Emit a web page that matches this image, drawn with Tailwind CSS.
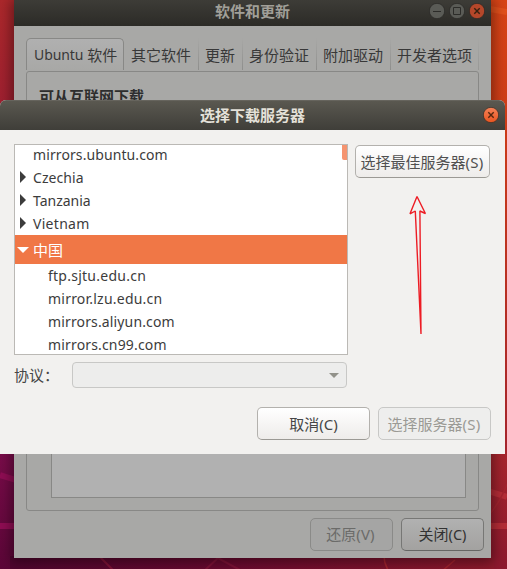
<!DOCTYPE html>
<html lang="zh-CN">
<head>
<meta charset="utf-8">
<title>软件和更新</title>
<script src="https://cdn.jsdelivr.net/npm/@tailwindcss/browser@4"></script>
</head>
<body class="overflow-hidden">
<div class="relative w-[507px] h-[569px] overflow-hidden font-['Noto_Sans','Noto_Sans_CJK_SC',sans-serif] text-[15px] leading-[22px] text-[#464646] whitespace-nowrap">
  <!-- wallpaper -->
  <svg class="absolute inset-0" width="507" height="569" viewBox="0 0 507 569">
    <defs>
      <linearGradient id="l" x1="0" y1="0" x2="0" y2="1"><stop offset="0" stop-color="#ac282b"/><stop offset=".18" stop-color="#9f2030"/><stop offset=".8" stop-color="#780c49"/><stop offset="1" stop-color="#5b0637"/></linearGradient>
      <linearGradient id="r" x1="0" y1="0" x2="0" y2="1"><stop offset="0" stop-color="#d84416"/><stop offset=".2" stop-color="#cf3d18"/><stop offset=".8" stop-color="#a6252d"/><stop offset="1" stop-color="#8d182e"/></linearGradient>
      <linearGradient id="b" x1="0" y1="0" x2="1" y2="0"><stop offset="0" stop-color="#50052f"/><stop offset=".45" stop-color="#6b0a30"/><stop offset="1" stop-color="#8f1a2c"/></linearGradient>
    </defs>
    <rect width="507" height="569" fill="url(#l)"/>
    <rect x="250" width="257" height="569" fill="url(#r)"/>
    <rect x="10" y="556" width="484" height="13" fill="url(#b)"/>
    <g fill="none">
      <path d="M0 475L16 480M0 526H16" stroke="#8f0d53" stroke-width="6"/>
      <path d="M488 491L507 497M488 526H507" stroke="#b52d37" stroke-width="6"/>
      <path d="M488 516Q500 503 507 484M455 560L441 572M384 556Q384 563 388 570" stroke="#a5242f" stroke-width="1.5"/>
      <path d="M100 557L114 571M219 557L203 572M216 557L240 570" stroke="#801338" stroke-width="2"/>
      <path d="M490 9L507 12" stroke="#e2501c" stroke-width="6"/>
    </g>
  </svg>

  <!-- main window -->
  <div class="absolute left-[14px] top-0 w-[477px] h-[558px] flex flex-col bg-[#a8a8a6] shadow-[0_2px_12px_3px_rgba(0,0,0,0.4)]">
    <div class="relative h-[26px] shrink-0 flex items-center justify-center bg-linear-to-b from-[#3d3c37] to-[#2c2b27] text-[#a09f98] font-bold">
      <span class="-translate-y-[2px]">软件和更新</span>
      <div class="absolute right-[6px] top-[3px] flex gap-[4px]">
        <svg width="16" height="16" viewBox="0 0 16 16"><circle cx="8" cy="8" r="7.7" fill="#5a5b56" stroke="#2b2a27" stroke-width=".8"/><path d="M4 8.5H12" stroke="#2c2c29"/></svg>
        <svg width="16" height="16" viewBox="0 0 16 16"><circle cx="8" cy="8" r="7.7" fill="#5a5b56" stroke="#2b2a27" stroke-width=".8"/><path d="M4.5 4.5h7v7h-7z" fill="none" stroke="#2c2c29"/></svg>
        <svg width="16" height="16" viewBox="0 0 16 16"><circle cx="8" cy="8" r="7.7" fill="#b5472a" stroke="#2b2a27" stroke-width=".8"/><path d="M5.3 5.3l5.4 5.4M10.7 5.3l-5.4 5.4" stroke="#35200f" stroke-width="1.4"/></svg>
      </div>
    </div>
    <div class="mt-[12px] mx-[12px] h-[32px] shrink-0 flex text-[#383838]">
      <div class="w-[98px] h-[32px] flex items-center pl-[7px] pt-[1px] border border-b-0 border-[#888886] rounded-t-[5px] bg-linear-to-b from-[#b0b0b0] to-[#a8a8a6]"><span class="text-[14px] tracking-[-0.1px]">Ubuntu</span><span class="ml-[4px]">软件</span></div>
      <div class="w-[74px] flex items-center pl-[7px] pt-[2px]">其它软件</div>
      <div class="w-px bg-linear-to-b from-transparent to-[#8e8e8c]"></div>
      <div class="w-[43px] flex items-center pl-[6px] pt-[2px]">更新</div>
      <div class="w-px bg-linear-to-b from-transparent to-[#8e8e8c]"></div>
      <div class="w-[73px] flex items-center pl-[6px] pt-[2px]">身份验证</div>
      <div class="w-px bg-linear-to-b from-transparent to-[#8e8e8c]"></div>
      <div class="w-[73px] flex items-center pl-[6px] pt-[2px]">附加驱动</div>
      <div class="w-px bg-linear-to-b from-transparent to-[#8e8e8c]"></div>
      <div class="w-[87px] flex items-center pl-[6px] pt-[2px]">开发者选项</div>
      <div class="w-px bg-linear-to-b from-transparent to-[#989896]"></div>
    </div>
    <div class="mt-[1px] ml-[12px] w-[453px] h-[440px] shrink-0 flex flex-col border border-[#888886] rounded-[3px]">
      <div class="pl-[12px] pt-[13px] font-bold text-[#2e2e2e]">可从互联网下载</div>
      <div class="mt-auto mb-[12px] ml-[24px] w-[415px] h-[80px] border border-[#888886] bg-[#b1b1b1]"></div>
    </div>
    <div class="mt-[7px] mr-[7px] flex justify-end gap-[8px]">
      <div class="w-[83px] h-[33px] flex items-center justify-center border border-[#8a8a88] rounded-[5px] bg-[#a5a5a4] text-[#6b6b69] pb-px pr-[2px]">还原<span class="tracking-[0.2px]">(V)</span></div>
      <div class="w-[83px] h-[33px] flex items-center justify-center border border-[#777775] border-b-[#666664] rounded-[5px] bg-linear-to-b from-[#b1b1b1] to-[#a3a2a0] text-[#323232] pb-px">关闭<span class="text-[14.5px]">(C)</span></div>
    </div>
  </div>

  <!-- server dialog -->
  <div class="absolute left-0 top-[100px] w-[505px] h-[354px] flex flex-col bg-[#f2f1ef] rounded-t-[6px] overflow-hidden">
    <div class="relative h-[30px] shrink-0 flex items-center justify-center border-t border-[#66645d] bg-linear-to-b from-[#5a5850] to-[#3f3e39] text-[#e4e1d9] font-bold">
      <span class="-translate-y-px">选择下载服务器</span>
      <svg class="absolute right-[6px] top-[6px]" width="16" height="16" viewBox="0 0 16 16"><defs><linearGradient id="c" x1="0" y1="0" x2="0" y2="1"><stop offset="0" stop-color="#f58258"/><stop offset="1" stop-color="#e9541f"/></linearGradient></defs><circle cx="8" cy="8" r="7.7" fill="url(#c)" stroke="#35312b" stroke-width=".8"/><path d="M5.3 5.3l5.4 5.4M10.7 5.3l-5.4 5.4" stroke="#54260f" stroke-width="1.4"/></svg>
    </div>
    <div class="mt-[14px] ml-[14px] flex gap-[7px]">
      <div class="relative w-[334px] h-[211px] border border-[#bbb9b5] bg-white overflow-hidden text-[14px] text-[#3c3c3c]">
        <div class="-mt-[2px] h-[23px] flex items-center pl-[18px]"><span class="tracking-[0.1px]">mirrors.ubuntu.com</span></div>
        <div class="h-[23px] flex items-center pl-[5px]"><svg class="mr-[7px] -mt-[2px]" width="6" height="12" viewBox="0 0 6 12"><path d="M0 0L6 6L0 12Z" fill="#3c3c3c"/></svg><span class="tracking-[0.08px]">Czechia</span></div>
        <div class="h-[23px] flex items-center pl-[5px]"><svg class="mr-[7px] -mt-[2px]" width="6" height="12" viewBox="0 0 6 12"><path d="M0 0L6 6L0 12Z" fill="#3c3c3c"/></svg><span>Tanzania</span></div>
        <div class="h-[23px] flex items-center pl-[5px]"><svg class="mr-[7px] -mt-[2px]" width="6" height="12" viewBox="0 0 6 12"><path d="M0 0L6 6L0 12Z" fill="#3c3c3c"/></svg><span class="tracking-[0.3px]">Vietnam</span></div>
        <div class="h-[29px] flex items-center pl-[2px] bg-[#f07746] text-white text-[15px]"><svg class="mr-[4px]" width="12" height="6" viewBox="0 0 12 6"><path d="M0 0H12L6 6Z" fill="#fff"/></svg><span>中国</span></div>
        <div class="h-[23px] flex items-center pl-[33px]"><span class="tracking-[0.25px]">ftp.sjtu.edu.cn</span></div>
        <div class="h-[23px] flex items-center pl-[33px]"><span class="tracking-[0.22px]">mirror.lzu.edu.cn</span></div>
        <div class="h-[23px] flex items-center pl-[33px]"><span class="tracking-[0.14px]">mirrors.aliyun.com</span></div>
        <div class="h-[23px] flex items-center pl-[33px]"><span class="tracking-[0.16px]">mirrors.cn99.com</span></div>
        <div class="absolute right-0 top-0 w-[5px] h-[15px] rounded-bl-[2px] bg-[#f59470]"></div>
      </div>
      <div class="mt-[1px] w-[135px] h-[33px] flex items-center justify-center border border-[#b3b1ad] border-b-[#9b9994] rounded-[5px] bg-linear-to-b from-white to-[#eeecea] text-[#505050] pr-px">选择最佳服务器<span class="tracking-[0.2px]">(S)</span></div>
    </div>
    <div class="mt-[7px] ml-[14px] flex items-center">
      <div class="w-[58px]">协议：</div>
      <div class="w-[275px] h-[26px] flex items-center justify-end pr-[7px] border border-[#c8c8c6] rounded-[4px] bg-[#ededec]"><svg width="10" height="5" viewBox="0 0 10 5"><path d="M0 0H10L5 5Z" fill="#92928a"/></svg></div>
    </div>
    <div class="mt-[19px] mr-[14px] flex justify-end gap-[8px]">
      <div class="w-[113px] h-[33px] flex items-center justify-center border border-[#b3b1ad] border-b-[#9b9994] rounded-[5px] bg-linear-to-b from-white to-[#eeecea]">取消<span>(C)</span></div>
      <div class="w-[113px] h-[33px] flex items-center justify-center border border-[#c8c8c6] rounded-[5px] bg-[#eeeeed] text-[#9b9a95] pr-px">选择服务器<span class="tracking-[0.2px]">(S)</span></div>
    </div>
  </div>

  <!-- hand-drawn arrow -->
  <svg class="absolute left-[400px] top-[190px]" width="35" height="150" viewBox="0 0 35 150" fill="none" stroke="#ed1c24" stroke-width="1.4"><path d="M21 144L15.3 21L10 23.8L17 6.5L25.4 23.5L19.9 21L21 144Z" stroke-linejoin="bevel"/></svg>
</div>
</body>
</html>
